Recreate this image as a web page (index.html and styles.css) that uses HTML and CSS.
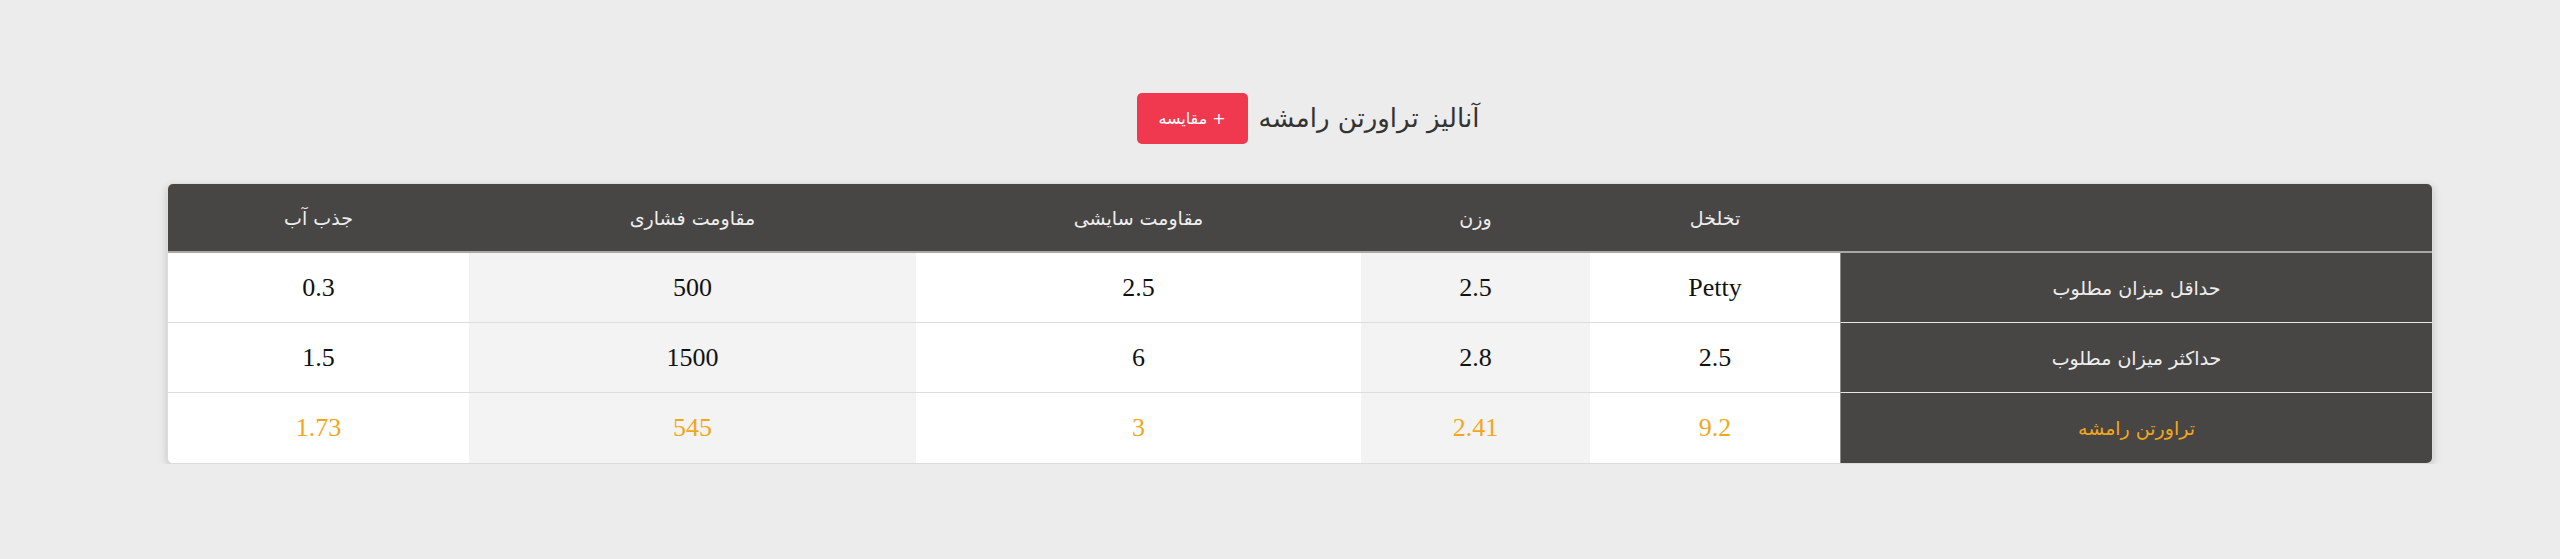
FILE: index.html
```html
<!DOCTYPE html>
<html lang="fa" dir="rtl">
<head>
<meta charset="utf-8">
<title>آنالیز تراورتن رامشه</title>
<link rel="stylesheet" href="styles.css">
</head>
<body>
<div class="page">
  <div class="title-row">
    <h1 class="title">آنالیز تراورتن رامشه</h1>
    <button class="compare-btn">+ مقایسه</button>
  </div>
  <div class="table-wrap">
    <div class="card">
      <table class="spec-table">
        <colgroup>
          <col class="c-label">
          <col class="c-poro">
          <col class="c-weight">
          <col class="c-abr">
          <col class="c-comp">
          <col class="c-abs">
        </colgroup>
        <thead>
          <tr>
            <th></th>
            <th>تخلخل</th>
            <th>وزن</th>
            <th>مقاومت سایشی</th>
            <th>مقاومت فشاری</th>
            <th>جذب آب</th>
          </tr>
        </thead>
        <tbody>
          <tr>
            <th class="row-head">حداقل میزان مطلوب</th>
            <td>Petty</td>
            <td>2.5</td>
            <td>2.5</td>
            <td>500</td>
            <td>0.3</td>
          </tr>
          <tr>
            <th class="row-head">حداکثر میزان مطلوب</th>
            <td>2.5</td>
            <td>2.8</td>
            <td>6</td>
            <td>1500</td>
            <td>1.5</td>
          </tr>
          <tr class="highlight">
            <th class="row-head">تراورتن رامشه</th>
            <td>9.2</td>
            <td>2.41</td>
            <td>3</td>
            <td>545</td>
            <td>1.73</td>
          </tr>
        </tbody>
      </table>
    </div>
  </div>
</div>
</body>
</html>
```

FILE: styles.css
```css
html, body {
  margin: 0;
  padding: 0;
  background: #ececec;
}

.page {
  direction: rtl;
  font-family: "DejaVu Sans", "Liberation Sans", sans-serif;
  padding-top: 93px;
}

.title-row {
  display: flex;
  justify-content: center;
  align-items: center;
  gap: 11px;
  padding-left: 56px;
  height: 51px;
}

.title {
  margin: 0;
  font-size: 26px;
  font-weight: normal;
  color: #333;
  line-height: 51px;
}

.compare-btn {
  width: 111px;
  height: 51px;
  border: none;
  border-radius: 5px;
  background: #f0384f;
  color: #fff;
  font-family: "DejaVu Sans", sans-serif;
  font-size: 16px;
  padding: 0;
}

.table-wrap {
  padding-right: 127px;
  margin-top: 39px;
}

.card {
  width: 2264px;
  border: 1px solid #dcdcdc;
  border-radius: 6px;
  overflow: hidden;
  box-shadow: 0 3px 8px rgba(0, 0, 0, 0.18);
  background: #fff;
}

.spec-table {
  width: 2264px;
  table-layout: fixed;
  border-collapse: separate;
  border-spacing: 0;
}

.c-label { width: 592px; }
.c-poro { width: 250px; }
.c-weight { width: 229px; }
.c-abr { width: 445px; }
.c-comp { width: 447px; }
.c-abs { width: 301px; }

.spec-table thead th {
  background: #484644;
  color: #eeeeee;
  font-weight: normal;
  font-size: 19px;
  height: 67px;
  padding: 0;
  border-bottom: 2px solid #a9a8a6;
  text-align: center;
}

.spec-table td,
.spec-table .row-head {
  height: 69px;
  padding: 0;
  text-align: center;
  border-bottom: 1px solid #dddddd;
}

.spec-table td {
  font-family: "Liberation Serif", "DejaVu Serif", serif;
  font-size: 26px;
  color: #111;
  background: #fff;
}

.spec-table td:nth-child(odd) {
  background: #f3f3f3;
}

.spec-table .row-head {
  background: #484644;
  color: #eeeeee;
  font-weight: normal;
  font-size: 19px;
  border-left: 1px solid #8c8a88;
  border-bottom: 1px solid #e6e6e6;
}

.spec-table tbody tr:last-child td,
.spec-table tbody tr:last-child .row-head {
  height: 70px;
  border-bottom: none;
}

.highlight td,
.highlight .row-head {
  color: #f2a71b;
}
```
